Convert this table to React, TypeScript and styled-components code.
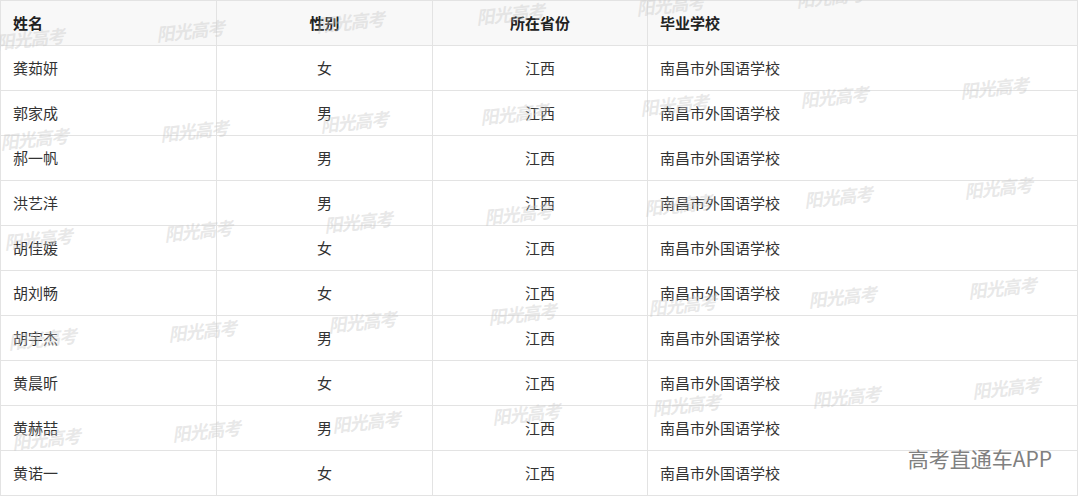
import React from "react";
import styled, { createGlobalStyle } from "styled-components";

const Global = createGlobalStyle`
  html, body { margin: 0; padding: 0; background: #fff; }
  body { font-family: "Noto Sans CJK SC", "Noto Sans", sans-serif; }
`;

const Page = styled.div`
  position: relative;
  width: 1080px;
  height: 497px;
  overflow: hidden;
  background: #fff;
`;

const Table = styled.table`
  border-collapse: collapse;
  table-layout: fixed;
  width: 1077px;
  margin-left: 0;
  color: #333;
  font-size: 15px;
`;

const HeadRow = styled.tr`
  background: #f8f8f8;
  height: 45px;
`;

const Row = styled.tr`
  height: 45px;
`;

type AlignProps = { $align?: "left" | "center" };

const HeadCell = styled.th<AlignProps>`
  border: 1px solid #e3e3e3;
  padding: 0 12px;
  font-weight: 700;
  color: #222;
  text-align: ${(p) => p.$align ?? "left"};
  line-height: 20px;
`;

const Cell = styled.td<AlignProps>`
  border: 1px solid #e3e3e3;
  padding: 0 12px;
  text-align: ${(p) => p.$align ?? "left"};
  line-height: 20px;
`;

const Mark = styled.span`
  position: absolute;
  font-family: "Noto Sans CJK SC", sans-serif;
  font-size: 18px;
  font-weight: 700;
  font-style: italic;
  color: rgba(200, 200, 200, 0.42);
  transform: translate(-50%, -50%) rotate(-6deg);
  white-space: nowrap;
  pointer-events: none;
  letter-spacing: -1px;
`;

const Brand = styled.div`
  position: absolute;
  right: 28px;
  top: 443px;
  font-family: "Noto Sans CJK SC", sans-serif;
  font-size: 21px;
  color: #808080;
  text-shadow: 0 0 2px #fff, 0 0 1px #fff;
`;

const rows: [string, string][] = [
  ["龚茹妍", "女"],
  ["郭家成", "男"],
  ["郝一帆", "男"],
  ["洪艺洋", "男"],
  ["胡佳媛", "女"],
  ["胡刘畅", "女"],
  ["胡宇杰", "男"],
  ["黄晨昕", "女"],
  ["黄赫喆", "男"],
  ["黄诺一", "女"],
];

const marks: { x: number; y: number }[] = [];
for (let r = 0; r < 5; r++) {
  for (let c = 0; c < 7; c++) {
    const x = 30 + 160 * c + 4 * r;
    const y = 38 + 100 * r - 8.5 * c;
    marks.push({ x, y });
  }
}

export default function App() {
  return (
    <Page>
      <Global />
      <Table>
        <colgroup>
          <col style={{ width: 216 }} />
          <col style={{ width: 216 }} />
          <col style={{ width: 215 }} />
          <col style={{ width: 430 }} />
        </colgroup>
        <thead>
          <HeadRow>
            <HeadCell>姓名</HeadCell>
            <HeadCell $align="center">性别</HeadCell>
            <HeadCell $align="center">所在省份</HeadCell>
            <HeadCell>毕业学校</HeadCell>
          </HeadRow>
        </thead>
        <tbody>
          {rows.map(([name, sex]) => (
            <Row key={name}>
              <Cell>{name}</Cell>
              <Cell $align="center">{sex}</Cell>
              <Cell $align="center">江西</Cell>
              <Cell>南昌市外国语学校</Cell>
            </Row>
          ))}
        </tbody>
      </Table>
      {marks.map((m, i) => (
        <Mark key={i} style={{ left: m.x, top: m.y }}>
          阳光高考
        </Mark>
      ))}
      <Brand>高考直通车APP</Brand>
    </Page>
  );
}
